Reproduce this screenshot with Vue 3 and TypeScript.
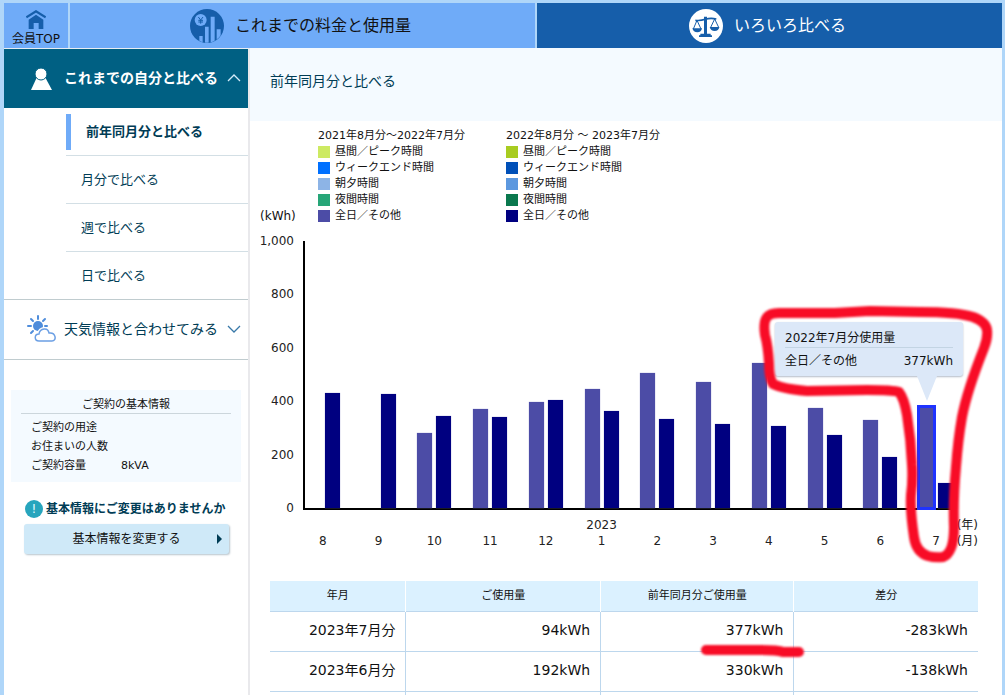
<script setup lang="ts">
interface MonthUsage {
  month: number
  year?: number
  previous: number | null
  current: number
  selected?: boolean
}

interface LegendGroup {
  title: string
  items: { label: string; tone: string }[]
}

interface UsageRow {
  month: string
  usage: string
  previous: string
  diff: string
}

const scaleMax = 1000
const ticks = ['1,000', '800', '600', '400', '200', '0']

const months: MonthUsage[] = [
  { month: 8, previous: null, current: 431 },
  { month: 9, previous: null, current: 426 },
  { month: 10, previous: 282, current: 346 },
  { month: 11, previous: 372, current: 342 },
  { month: 12, previous: 396, current: 403 },
  { month: 1, year: 2023, previous: 446, current: 363 },
  { month: 2, previous: 506, current: 332 },
  { month: 3, previous: 472, current: 316 },
  { month: 4, previous: 544, current: 308 },
  { month: 5, previous: 376, current: 274 },
  { month: 6, previous: 330, current: 192 },
  { month: 7, previous: 377, current: 94, selected: true },
]

const labels = ['昼間／ピーク時間', 'ウィークエンド時間', '朝夕時間', '夜間時間', '全日／その他']
const tones = ['day', 'weekend', 'morning', 'night', 'all']

const legends: LegendGroup[] = [
  {
    title: '2021年8月分～2022年7月分',
    items: labels.map((label, i) => ({ label, tone: `prev-${tones[i]}` })),
  },
  {
    title: '2022年8月分 ～ 2023年7月分',
    items: labels.map((label, i) => ({ label, tone: `cur-${tones[i]}` })),
  },
]

const subItems = ['月分で比べる', '週で比べる', '日で比べる']

const rows: UsageRow[] = [
  { month: '2023年7月分', usage: '94kWh', previous: '377kWh', diff: '-283kWh' },
  { month: '2023年6月分', usage: '192kWh', previous: '330kWh', diff: '-138kWh' },
  { month: '', usage: '', previous: '', diff: '' },
]

const barHeight = (value: number | null) => `${((value ?? 0) / scaleMax) * 100}%`
</script>

<template>
  <div class="page">
    <nav class="top-nav">
      <a href="#" class="home">
        <svg class="home-icon" viewBox="0 0 60 57" aria-hidden="true">
          <path d="M1 22 30 4 59 22" fill="none" stroke="#165eaa" stroke-width="7" />
          <path d="M8 29 30 14 52 29V57H38V39H23V57H8Z" fill="#165eaa" />
        </svg>
        <span>会員TOP</span>
      </a>
      <a href="#" class="tab">
        <svg class="tab-icon" viewBox="0 0 102 102" aria-hidden="true">
          <clipPath id="disc"><circle cx="51" cy="51" r="50" /></clipPath>
          <circle cx="51" cy="51" r="51" fill="#165eaa" />
          <circle cx="32" cy="33" r="18" fill="#6fabf8" />
          <path d="M25 24 32 33 39 24M32 33V44M25 34H39M25 39H39" fill="none" stroke="#165eaa" stroke-width="3" />
          <g clip-path="url(#disc)" fill="#6fabf8">
            <path d="M28 81H38V102H28ZM45 53H56V102H45ZM62 23H74V102H62ZM80 61H92V102H80Z" />
          </g>
        </svg>
        <span>これまでの料金と使用量</span>
      </a>
      <a href="#" class="tab active">
        <svg class="tab-icon" viewBox="0 0 102 102" aria-hidden="true">
          <circle cx="51" cy="51" r="51" fill="#fff" />
          <g fill="none" stroke="#165eaa">
            <path d="M19 34Q34 36 49 31T82 30" stroke-width="5" />
            <path d="M24 34 13 60M24 34 36 60M77 30 65 55M77 30 89 55" stroke-width="3" />
          </g>
          <path
            d="M45 23H54V74H45ZM34 74H65V79H34ZM30 79H69V84H30ZM10 58H39Q37 70 25 70T10 58ZM62 54H91Q89 66 77 66T62 54Z"
            fill="#165eaa"
          />
        </svg>
        <span>いろいろ比べる</span>
      </a>
    </nav>

    <div class="body">
      <aside class="sidebar">
        <button type="button" class="group open">
          <svg class="group-icon" viewBox="0 0 30 30" aria-hidden="true">
            <path d="M11 14H19L26 27H5Z" fill="#fff" />
            <circle cx="15" cy="11" r="6" fill="#fff" stroke="#006083" stroke-width="1" />
          </svg>
          <span>これまでの自分と比べる</span>
          <svg class="chevron" viewBox="0 0 14 8" aria-hidden="true">
            <path d="M1 7 7 1 13 7" fill="none" stroke="#d4ebfa" stroke-width="1.3" />
          </svg>
        </button>
        <ul class="sub-menu">
          <li><a href="#" class="current">前年同月分と比べる</a></li>
          <li v-for="item in subItems" :key="item"><a href="#">{{ item }}</a></li>
        </ul>
        <button type="button" class="group weather">
          <svg class="group-icon" viewBox="0 0 30 30" aria-hidden="true">
            <circle cx="12" cy="12" r="5" fill="#4f8ddb" />
            <path
              d="M12 2V5M2 12H5M19 12H21M5 5 7 7M17 7 19 5M5 19 7 17"
              fill="none" stroke="#4f8ddb" stroke-width="2" stroke-linecap="round"
            />
            <path
              d="M13 27C8 27 8 20 13 20C14 14 22 13 23 19C30 18 31 27 26 27Z"
              fill="#fff" stroke="#fff" stroke-width="4"
            />
            <path
              d="M13 27C8 27 8 20 13 20C14 14 22 13 23 19C30 18 31 27 26 27Z"
              fill="#fff" stroke="#6b9fe4" stroke-width="1.5"
            />
          </svg>
          <span>天気情報と合わせてみる</span>
          <svg class="chevron" viewBox="0 0 14 8" aria-hidden="true">
            <path d="M1 1 7 7 13 1" fill="none" stroke="#3878a8" stroke-width="1.3" />
          </svg>
        </button>

        <section class="contract">
          <h2>ご契約の基本情報</h2>
          <dl>
            <dt>ご契約の用途</dt><dd></dd>
            <dt>お住まいの人数</dt><dd></dd>
            <dt>ご契約容量</dt><dd>8kVA</dd>
          </dl>
        </section>
        <p class="notice"><i class="mark">!</i>基本情報にご変更はありませんか</p>
        <button type="button" class="change">
          <span>基本情報を変更する</span>
          <svg class="play" viewBox="0 0 5 10" aria-hidden="true"><path d="M0 0 5 5 0 10Z" fill="#003c55" /></svg>
        </button>
      </aside>

      <main class="content">
        <h1>前年同月分と比べる</h1>

        <section class="chart">
          <div class="chart-head">
            <span class="unit">(kWh)</span>
            <div v-for="legend in legends" :key="legend.title" class="legend">
              <p>{{ legend.title }}</p>
              <ul>
                <li v-for="item in legend.items" :key="item.tone">
                  <i class="swatch" :class="item.tone"></i>{{ item.label }}
                </li>
              </ul>
            </div>
          </div>

          <div class="plot">
            <div class="ticks"><span v-for="tick in ticks" :key="tick">{{ tick }}</span></div>
            <div class="bars">
              <div v-for="m in months" :key="m.month" class="pair">
                <div
                  class="bar"
                  :class="{ 'prev-all': m.previous !== null, selected: m.selected }"
                  :style="{ height: barHeight(m.previous) }"
                ></div>
                <div class="bar cur-all" :style="{ height: barHeight(m.current) }"></div>
              </div>
            </div>
          </div>
          <div class="months">
            <div v-for="m in months" :key="m.month" class="month">
              <span>{{ m.year }}</span>
              <span>{{ m.month }}</span>
            </div>
            <div class="axis-unit"><span>(年)</span><span>(月)</span></div>
          </div>

          <div class="tooltip">
            <p class="tooltip-title">2022年7月分使用量</p>
            <p class="tooltip-row"><span>全日／その他</span><span>377kWh</span></p>
          </div>
        </section>

        <table>
          <thead>
            <tr>
              <th class="col-month">年月</th>
              <th class="col-usage">ご使用量</th>
              <th class="col-prev">前年同月分ご使用量</th>
              <th>差分</th>
            </tr>
          </thead>
          <tbody>
            <tr v-for="(row, i) in rows" :key="i">
              <td>{{ row.month }}</td>
              <td>{{ row.usage }}</td>
              <td>{{ row.previous }}</td>
              <td>{{ row.diff }}</td>
            </tr>
          </tbody>
        </table>

        <svg class="marker" viewBox="750 300 252 370" aria-hidden="true">
          <g fill="none" stroke="#f80c26" stroke-width="10" stroke-linecap="round" stroke-linejoin="round">
            <path
              d="M767 317Q770 313 779 313L835 313 870 311 920 312Q957 312 973 317Q986 322 987 330Q988 338 984 348
                 Q967 391 962 417Q958 440 956 467Q953 500 954 527Q954 553 943 557Q935 558 928 556Q916 552 914 537
                 Q910 510 911 495Q913 480 912 465Q911 440 907 415Q904 398 899 392Q893 390 867 390L807 391
                 Q783 389 773 384Q769 378 769 363Q768 346 765 335Q763 322 767 317Z"
            />
            <path d="M706 650 760 650Q778 650 783 652L799 652" />
          </g>
        </svg>
      </main>
    </div>
  </div>
</template>

<style>
body {
  margin: 0;
  background: #afd6f9;
}
</style>

<style scoped>
* {
  box-sizing: border-box;
}

.page {
  display: flex;
  flex-direction: column;
  height: 100vh;
  padding: 3px 3px 0 4px;
  overflow: hidden;
  background: #afd6f9;
  color: #111;
  font-family: "DejaVu Sans", "Noto Sans CJK JP", sans-serif;
  font-size: 12px;
  line-height: 16px;
}

p, h1, h2, ul, dl, dd {
  margin: 0;
  padding: 0;
  list-style: none;
}

a {
  color: inherit;
  text-decoration: none;
}

button {
  border: 0;
  font: inherit;
  color: inherit;
  cursor: pointer;
}

.top-nav {
  display: flex;
  flex: none;
  gap: 2px;
  height: 45px;
}

.home {
  display: flex;
  flex-direction: column;
  align-items: center;
  width: 64px;
  padding-top: 7px;
  gap: 2px;
  background: #6fabf8;
  white-space: nowrap;
}

.home-icon {
  width: 20px;
  height: 19px;
}

.tab {
  display: flex;
  flex: 1;
  align-items: center;
  justify-content: center;
  gap: 11px;
  padding-right: 4px;
  background: #6fabf8;
  font-size: 16px;
}

.tab.active {
  background: #165eaa;
  color: #fff;
}

.tab-icon {
  width: 34px;
  height: 34px;
}

.body {
  display: flex;
  flex: 1;
  min-height: 0;
}

.sidebar {
  flex: none;
  width: 246px;
  border-top: 1px solid #e8edf2;
  border-right: 2px solid #e9e9ec;
  background: #fff;
  color: #003c55;
}

.group {
  display: flex;
  align-items: center;
  width: 100%;
  height: 59px;
  padding: 0 7px 2px 22px;
  background: #fff;
  font-size: 14px;
}

.group span {
  margin-left: 8px;
  white-space: nowrap;
}

.group.open {
  background: #006083;
  color: #fff;
  font-weight: 700;
}

.group.weather {
  height: 60px;
  border-bottom: 1px solid #c0cccf;
}

.group-icon {
  flex: none;
  width: 30px;
  height: 30px;
}

.chevron {
  width: 14px;
  height: 8px;
  margin-left: auto;
}

.sub-menu {
  padding-left: 62px;
  border-bottom: 1px solid #c0cccf;
  font-size: 13px;
}

.sub-menu li {
  display: flex;
  align-items: center;
  height: 48px;
  border-bottom: 1px solid #d3dfe5;
}

.sub-menu li:last-child {
  height: 47px;
  border-bottom: 0;
}

.sub-menu a {
  padding-left: 15px;
}

.sub-menu .current {
  padding: 10px 0 10px 15px;
  border-left: 5px solid #6fabf8;
  font-weight: 700;
}

.contract {
  margin: 30px 7px 0;
  padding: 7px 10px 7px;
  background: #f4faff;
  color: #111;
  font-size: 11px;
}

.contract h2 {
  border-bottom: 1px solid #ccd6dc;
  font-size: 11px;
  font-weight: 400;
  text-align: center;
}

.contract dl {
  display: grid;
  grid-template-columns: 90px 1fr;
  margin-top: 4px;
  padding-left: 10px;
  line-height: 19px;
}

.notice {
  display: flex;
  align-items: center;
  gap: 3px;
  margin: 18px 0 0 21px;
  font-weight: 700;
  white-space: nowrap;
}

.mark {
  width: 18px;
  height: 18px;
  border-radius: 50%;
  background: #27a5bd;
  color: #e6fbff;
  font-style: normal;
  font-weight: 400;
  line-height: 18px;
  text-align: center;
}

.change {
  display: flex;
  align-items: center;
  width: 205px;
  height: 30px;
  margin: 6px 0 0 20px;
  padding: 0 7px 0 12px;
  border-radius: 3px;
  background: #cfe9f8;
  box-shadow: 1px 1px 2px #b8c4cc;
  color: #111;
}

.change span {
  flex: 1;
}

.play {
  width: 5px;
  height: 10px;
}

.content {
  position: relative;
  flex: 1;
  min-width: 0;
  background: #fff;
}

h1 {
  height: 73px;
  padding: 25px 20px 0;
  background: #f4faff;
  color: #003c55;
  font-size: 14px;
  font-weight: 400;
}

.chart {
  position: relative;
  padding: 7px 38px 0 0;
}

.chart-head {
  display: grid;
  grid-template-columns: 68px 188px 1fr;
}

.unit {
  align-self: end;
  padding-left: 10px;
}

.legend {
  font-size: 11px;
  white-space: nowrap;
}

.legend li {
  display: flex;
  align-items: center;
  gap: 5px;
}

.swatch {
  width: 12px;
  height: 12px;
}

.prev-day { background: #cdea62; }
.prev-weekend { background: #0070ff; }
.prev-morning { background: #8db4e6; }
.prev-night { background: #27a678; }
.prev-all { background: #4c4ca6; }
.cur-day { background: #a8cc21; }
.cur-weekend { background: #0050b8; }
.cur-morning { background: #5c98df; }
.cur-night { background: #0a784e; }
.cur-all { background: #000080; }

.plot {
  display: flex;
  margin-top: 17px;
  height: 267px;
}

.ticks {
  display: flex;
  flex-direction: column;
  justify-content: space-between;
  width: 45px;
  margin: -8px 0;
  padding-right: 1px;
  color: #222;
  text-align: right;
}

.bars {
  position: relative;
  display: grid;
  flex: 1;
  grid-template-columns: repeat(12, 1fr);
}

.bars::before {
  content: "";
  position: absolute;
  inset: 0 11px -2px 8px;
  border: solid #000;
  border-width: 0 0 2px 2px;
}

.pair {
  position: relative;
  display: flex;
  align-items: flex-end;
  justify-content: center;
  gap: 4px;
}

.bar {
  width: 15px;
  box-shadow: 0 0 1px #8c8ccb;
}

.bar.selected {
  outline: 2px solid #1f33ff;
  box-shadow: inset 0 0 0 1px #1f33ff;
}

.months {
  position: relative;
  display: grid;
  grid-template-columns: repeat(12, 1fr);
  margin: 9px 0 0 45px;
  color: #222;
}

.month {
  display: grid;
  grid-template-rows: 16px 16px;
  justify-items: center;
}

.axis-unit {
  position: absolute;
  top: 0;
  right: -14px;
  display: grid;
}

.tooltip {
  position: absolute;
  top: 201px;
  right: 39px;
  width: 188px;
  padding: 8px 10px 7px;
  border-radius: 3px;
  background: #dce8f8;
  box-shadow: 0 1px 2px #b4bcc8;
}

.tooltip::after {
  content: "";
  position: absolute;
  top: 100%;
  right: 26px;
  border: solid transparent;
  border-width: 25px 10px 0;
  border-top-color: #dce8f8;
}

.tooltip-title {
  padding-bottom: 1px;
  border-bottom: 1px solid #c3d4e3;
}

.tooltip-row {
  display: flex;
  justify-content: space-between;
  padding-top: 5px;
}

table {
  width: calc(100% - 44px);
  margin: 32px 24px 0 20px;
  border-collapse: collapse;
  table-layout: fixed;
}

.col-month { width: 19.2%; }
.col-usage { width: 27.5%; }
.col-prev { width: 27.3%; }

th {
  height: 30px;
  padding: 0;
  border-right: 1px solid #fff;
  background: #dbf1ff;
  font-size: 11px;
  font-weight: 400;
}

td {
  height: 40px;
  padding: 0 10px 2px 0;
  border-top: 1px solid #bdd7ed;
  border-right: 1px solid #bdd7ed;
  font-size: 14px;
  text-align: right;
}

th:last-child,
td:last-child {
  border-right: 0;
}

.marker {
  position: absolute;
  top: 252px;
  right: 0;
  width: 252px;
  height: 370px;
  overflow: visible;
  filter: blur(1px);
  pointer-events: none;
}
</style>
